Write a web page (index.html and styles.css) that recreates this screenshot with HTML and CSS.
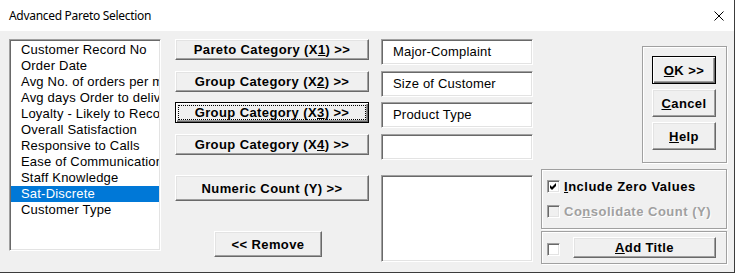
FILE: index.html
```html
<!DOCTYPE html>
<html lang="en">
<head>
	<meta charset="UTF-8">
	<title>Advanced Pareto Selection</title>
	<link rel="stylesheet" href="styles.css">
</head>
<body>
	<div class="dialog">
		<div class="titlebar">
			<span class="title">Advanced Pareto Selection</span>
			<svg class="close" width="10" height="10" viewBox="0 0 10 10">
				<path d="M0.5 0.5 L9.5 9.5 M9.5 0.5 L0.5 9.5" stroke="#000" stroke-width="1" fill="none"/>
			</svg>
		</div>
		<div class="content">
			<ul class="varlist">
				<li>Customer Record No</li>
				<li>Order Date</li>
				<li>Avg No. of orders per month</li>
				<li>Avg days Order to delivery</li>
				<li>Loyalty - Likely to Recommend</li>
				<li>Overall Satisfaction</li>
				<li>Responsive to Calls</li>
				<li>Ease of Communication</li>
				<li>Staff Knowledge</li>
				<li class="selected">Sat-Discrete</li>
				<li>Customer Type</li>
			</ul>

			<div class="fields">
				<button class="btn btn-cat">Pareto Category (X<u>1</u>) &gt;&gt;</button>
				<div class="box">Major-Complaint</div>

				<button class="btn btn-cat">Group Category (X<u>2</u>) &gt;&gt;</button>
				<div class="box">Size of Customer</div>

				<button class="btn btn-cat focused">Group Category (X<u>3</u>) &gt;&gt;</button>
				<div class="box">Product Type</div>

				<button class="btn btn-cat">Group Category (X<u>4</u>) &gt;&gt;</button>
				<div class="box"></div>

				<div class="lower">
					<button class="btn btn-num">Numeric Count (Y) &gt;&gt;</button>
					<button class="btn btn-remove">&lt;&lt; Remove</button>
				</div>
				<div class="box box-big"></div>
			</div>

			<div class="side">
				<div class="frame frame-buttons">
					<button class="btn btn-side default"><u>O</u>K &gt;&gt;</button>
					<button class="btn btn-side"><u>C</u>ancel</button>
					<button class="btn btn-side"><u>H</u>elp</button>
				</div>
				<div class="frame frame-options">
					<div class="opt">
						<span class="check">
							<svg width="7" height="7" viewBox="0 0 7 7"><polygon points="0,2 2,4 6,0 6,3 2,7 0,5" fill="#000"/></svg>
						</span>
						<span class="label"><u>I</u>nclude Zero Values</span>
					</div>
					<div class="opt disabled">
						<span class="check"></span>
						<span class="label">Co<u>n</u>solidate Count (Y)</span>
					</div>
				</div>
				<div class="frame frame-title">
					<span class="check"></span>
					<button class="btn btn-title"><u>A</u>dd Title</button>
				</div>
			</div>
		</div>
	</div>
</body>
</html>
```

FILE: styles.css
```css
html, body {
	margin: 0;
	padding: 0;
	background: #f0f0f0;
}
ul { margin: 0; padding: 0; list-style: none; }
u { text-decoration: underline; text-underline-offset: 1px; }

.dialog {
	width: 735px;
	height: 273px;
	box-sizing: border-box;
	border-right: 1px solid #3c3c3c;
	border-bottom: 1px solid #3c3c3c;
	background: #f0f0f0;
	font-family: "Liberation Sans", Arial, sans-serif;
	font-size: 13px;
	color: #000;
}

.titlebar {
	height: 31px;
	background: #fff;
	display: flex;
	align-items: center;
	justify-content: space-between;
	padding: 0 10px 0 9px;
}
.title {
	font-family: "Noto Sans", sans-serif;
	font-size: 12px;
	letter-spacing: -0.3px;
	color: #000;
	padding-bottom: 1px;
}

.content {
	display: flex;
	align-items: flex-start;
	padding-top: 8px;
}

/* sunken 3d border */
.varlist, .box {
	box-sizing: border-box;
	background: #fff;
	border: 1px solid;
	border-color: #a0a0a0 #fff #fff #a0a0a0;
	box-shadow: inset 1px 1px #696969, inset -1px -1px #e3e3e3;
}

.varlist {
	margin-left: 9px;
	width: 152px;
	height: 212px;
	padding: 2px 1px 0 1px;
	overflow: hidden;
}
.varlist li {
	height: 16px;
	line-height: 16px;
	padding-left: 10px;
	white-space: nowrap;
	overflow: hidden;
	letter-spacing: 0.2px;
}
.varlist li.selected {
	background: #0078d7;
	color: #fff;
}

.fields {
	margin-left: 14px;
	display: grid;
	grid-template-columns: 194px 152px;
	grid-template-rows: 32px 31px 32px 41px auto;
	column-gap: 12px;
	align-items: start;
}

.btn {
	box-sizing: border-box;
	margin: 0;
	padding: 0;
	background: #f0f0f0;
	border: 1px solid;
	border-color: #fff #696969 #696969 #fff;
	box-shadow: inset -1px -1px #a0a0a0, inset 1px 1px #e3e3e3;
	font-family: "Liberation Sans", Arial, sans-serif;
	font-size: 13px;
	font-weight: bold;
	letter-spacing: 0.4px;
	color: #000;
	text-align: center;
	white-space: nowrap;
}
.btn.focused, .btn.default {
	border-color: #000;
	box-shadow: inset 1px 1px #fff, inset -1px -1px #696969, inset -2px -2px #a0a0a0;
}
.btn.focused {
	outline: 1px dotted #000;
	outline-offset: -4px;
}

.btn-cat { width: 194px; height: 21px; }

.box {
	height: 26px;
	line-height: 24px;
	padding-left: 11px;
	letter-spacing: 0.2px;
	white-space: nowrap;
}
.box-big { height: 87px; }

.lower {
	display: flex;
	flex-direction: column;
	align-items: flex-start;
}
.btn-num { width: 194px; height: 26px; }
.btn-remove { width: 108px; height: 26px; margin: 30px 0 0 39px; }

.side {
	margin-left: 8px;
	width: 187px;
	display: flex;
	flex-direction: column;
}

/* etched group box */
.frame {
	box-sizing: border-box;
	border: 1px solid #a0a0a0;
	box-shadow: inset 1px 1px #fff, 1px 1px #fff;
	width: 186px;
}

.frame-buttons {
	align-self: flex-end;
	margin-right: 1px;
	width: 85px;
	height: 117px;
	margin-top: 7px;
	padding: 9px 0 0 9px;
	display: flex;
	flex-direction: column;
	gap: 5px;
}
.btn-side { width: 64px; height: 28px; }

.frame-options {
	margin-top: 6px;
	height: 60px;
	padding: 10px 0 0 5px;
	display: flex;
	flex-direction: column;
	gap: 12px;
}
.opt {
	display: flex;
	align-items: center;
	height: 13px;
	gap: 4px;
}
.opt .label {
	font-weight: bold;
	letter-spacing: 0.5px;
	line-height: 13px;
	white-space: nowrap;
}
.opt.disabled .label {
	color: #a0a0a0;
	text-shadow: 1px 1px #fff;
}

.check {
	box-sizing: border-box;
	width: 13px;
	height: 13px;
	flex: none;
	background: #fff;
	border: 1px solid;
	border-color: #a0a0a0 #fff #fff #a0a0a0;
	box-shadow: inset 1px 1px #696969, inset -1px -1px #e3e3e3;
	display: flex;
	align-items: center;
	justify-content: center;
}
.opt.disabled .check { background: #f0f0f0; }

.frame-title {
	margin-top: 2px;
	height: 33px;
	padding-left: 5px;
	display: flex;
	align-items: center;
	gap: 13px;
}
.frame-title .check { margin-top: 3px; }
.btn-title { width: 143px; height: 21px; }
```
